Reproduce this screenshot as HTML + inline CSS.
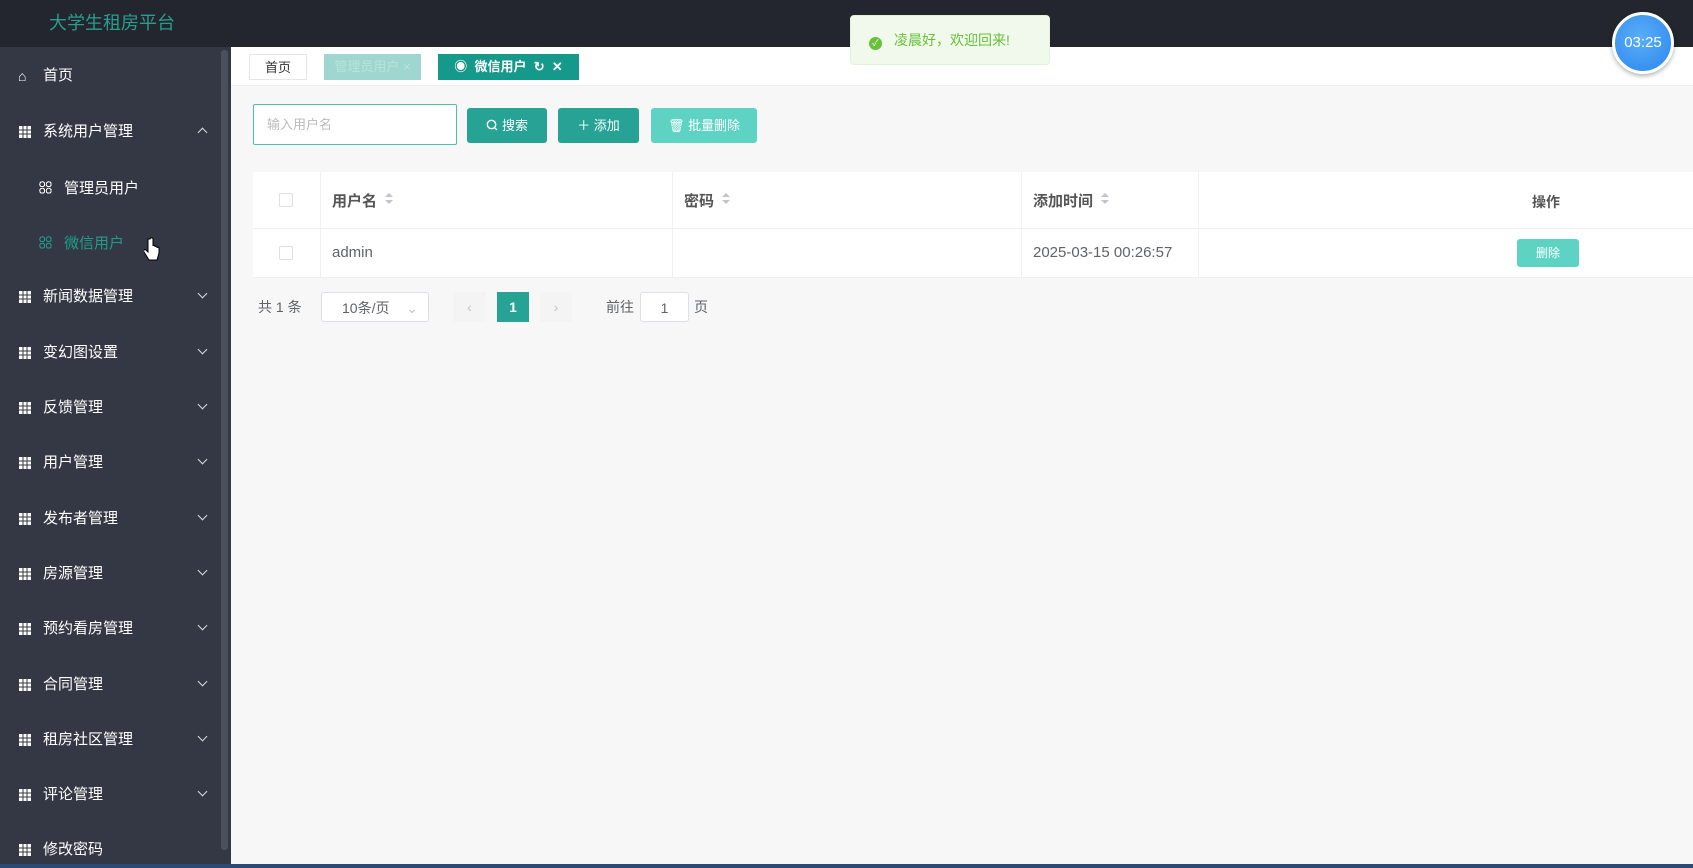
<!DOCTYPE html>
<html><head><meta charset="utf-8"><style>
*{box-sizing:border-box;margin:0;padding:0}
body{width:1693px;height:868px;overflow:hidden;background:#f7f7f7;font-family:"Liberation Sans","Noto Sans CJK SC",sans-serif;position:relative}
.hdr{position:absolute;left:0;top:0;width:1693px;height:47px;background:#23262e}
.title{position:absolute;left:49px;top:9px;color:#2a9d8f;font-size:18px}
.side{position:absolute;left:0;top:47px;width:231px;height:817px;background:#343844}
.sb{position:absolute;left:221px;top:50px;width:7px;height:800px;background:#4c505a;border-radius:3px}
.mi{position:absolute;left:0;width:220px;color:#fff;font-size:15px;height:20px;line-height:20px}
.mi .ic{position:absolute;left:19px;top:4px;width:12px;height:12px;background:
linear-gradient(90deg,transparent 3.5px,#343844 3.5px,#343844 4.5px,transparent 4.5px,transparent 7.5px,#343844 7.5px,#343844 8.5px,transparent 8.5px),
linear-gradient(0deg,transparent 3.5px,#343844 3.5px,#343844 4.5px,transparent 4.5px,transparent 7.5px,#343844 7.5px,#343844 8.5px,transparent 8.5px),#fff}
.mi .t{position:absolute;left:43px;top:0}
.mi .ar{position:absolute;left:199px;top:3px;width:7px;height:7px;border-right:1.5px solid #ddd;border-bottom:1.5px solid #ddd;transform:rotate(45deg)}
.mi .up{top:7px;transform:rotate(-135deg)}
.sub{position:absolute;left:39px;font-size:15px;color:#fff}
.sub .g{display:inline-block;width:13px;height:13px;vertical-align:-1px;margin-right:12px;background:
radial-gradient(circle,transparent 2px,currentColor 2px,currentColor 3px,transparent 3px) 0 0/6.5px 6.5px}
.tabs{position:absolute;left:231px;top:47px;width:1462px;height:39px;background:#fff;border-bottom:1px solid #eee}
.tab{position:absolute;top:7px;height:26px;line-height:26px;font-size:13px;text-align:center}
.inp{position:absolute;left:253px;top:104px;width:204px;height:41px;border:1px solid #4fc0a8;background:#fff;border-radius:2px;color:#bbb;font-size:13px;line-height:39px;padding-left:13px}
.btn{position:absolute;top:108px;height:35px;line-height:35px;color:#fff;font-size:13px;text-align:center;border-radius:3px}
.tbl{position:absolute;left:253px;top:172px;width:1440px;height:105px;background:#fff}
.cell{position:absolute;font-size:15px;color:#606266}
.vl{position:absolute;top:172px;height:105px;width:1px;background:#eef0f3}
.cb{position:absolute;left:279px;width:14px;height:14px;border:1px solid #dcdfe6;border-radius:2px;background:#fff}
.sort{display:inline-block;margin-left:8px;vertical-align:1px;width:0;height:12px;position:relative}
.sort:before{content:"";position:absolute;top:0;border:4px solid transparent;border-bottom-color:#c0c4cc;border-top:0}
.sort:after{content:"";position:absolute;top:7px;border:4px solid transparent;border-top-color:#c0c4cc;border-bottom:0}
.pg{position:absolute;top:292px;height:30px;line-height:30px;font-size:14px;color:#606266}
</style></head><body>
<div class="hdr"><div class="title">大学生租房平台</div></div>
<div class="side"></div>
<div class="sb"></div>
<div class="mi" style="top:66px"><span style="position:absolute;left:18px;top:0;font-size:14px">⌂</span><span class="t">首页</span></div>
<div class="mi" style="top:122px"><span class="ic"></span><span class="t">系统用户管理</span><span class="ar up"></span></div>
<div class="sub" style="top:177px"><span class="g"></span>管理员用户</div>
<div class="sub" style="top:232px;color:#1f9d8a"><span class="g"></span>微信用户</div>
<div class="mi" style="top:287px"><span class="ic"></span><span class="t">新闻数据管理</span><span class="ar"></span></div>
<div class="mi" style="top:343px"><span class="ic"></span><span class="t">变幻图设置</span><span class="ar"></span></div>
<div class="mi" style="top:398px"><span class="ic"></span><span class="t">反馈管理</span><span class="ar"></span></div>
<div class="mi" style="top:453px"><span class="ic"></span><span class="t">用户管理</span><span class="ar"></span></div>
<div class="mi" style="top:509px"><span class="ic"></span><span class="t">发布者管理</span><span class="ar"></span></div>
<div class="mi" style="top:564px"><span class="ic"></span><span class="t">房源管理</span><span class="ar"></span></div>
<div class="mi" style="top:619px"><span class="ic"></span><span class="t">预约看房管理</span><span class="ar"></span></div>
<div class="mi" style="top:675px"><span class="ic"></span><span class="t">合同管理</span><span class="ar"></span></div>
<div class="mi" style="top:730px"><span class="ic"></span><span class="t">租房社区管理</span><span class="ar"></span></div>
<div class="mi" style="top:785px"><span class="ic"></span><span class="t">评论管理</span><span class="ar"></span></div>
<div class="mi" style="top:840px"><span class="ic"></span><span class="t">修改密码</span></div>
<div style="position:absolute;left:0;top:864px;width:1693px;height:4px;background:#2c4a78"></div>
<svg style="position:absolute;left:144px;top:237px" width="16" height="26" viewBox="0 0 16 26"><path d="M4 2v13l-2-2c-1-1-3 0-2 2l5 8h8l2-7v-5c0-1-2-1-2 0v-1c0-1-2-1-2 0v-1c0-1-2-1-2 0V2c0-1.5-3-1.5-3 0z" fill="#fff" stroke="#000" stroke-width="1"/></svg>
<div class="tabs"></div>
<div class="tab" style="left:249px;top:54px;width:58px;border:1px solid #e6e6e6;background:#fff;color:#333">首页</div>
<div class="tab" style="left:324px;top:54px;width:97px;background:#9fd6cf;color:#b9e3dd">管理员用户 ×</div>
<div class="tab" style="left:438px;top:54px;width:141px;background:#15998a;color:#fff;font-weight:bold">◉&nbsp; 微信用户 &nbsp;↻&nbsp; ✕</div>
<div class="inp">输入用户名</div>
<div class="btn" style="left:467px;width:80px;background:#26a394"><svg width="12" height="12" viewBox="0 0 12 12" style="vertical-align:-1px;margin-right:4px"><circle cx="5.5" cy="5.5" r="4.2" fill="none" stroke="#fff" stroke-width="1.4"/><path d="M8.5 8.5l2.5 2.5" stroke="#fff" stroke-width="1.4"/></svg>搜索</div>
<div class="btn" style="left:558px;width:81px;background:#26a394">＋ 添加</div>
<div class="btn" style="left:651px;width:106px;background:#5ed3c4">🗑 批量删除</div>
<div class="tbl"></div>
<div style="position:absolute;left:253px;top:228px;width:1440px;height:1px;background:#eef0f3"></div>
<div style="position:absolute;left:253px;top:277px;width:1440px;height:1px;background:#eef0f3"></div>
<div class="vl" style="left:320px"></div><div class="vl" style="left:672px"></div><div class="vl" style="left:1021px"></div><div class="vl" style="left:1198px"></div>
<div class="cb" style="top:193px"></div><div class="cb" style="top:246px"></div>
<div class="cell" style="left:332px;top:190px;font-weight:bold;color:#555">用户名<span class="sort"></span></div>
<div class="cell" style="left:684px;top:190px;font-weight:bold;color:#555">密码<span class="sort"></span></div>
<div class="cell" style="left:1033px;top:190px;font-weight:bold;color:#555">添加时间<span class="sort"></span></div>
<div class="cell" style="left:1532px;top:192px;font-weight:bold;color:#555;font-size:14px">操作</div>
<div class="cell" style="left:332px;top:244px">admin</div>
<div class="cell" style="left:1033px;top:244px">2025-03-15 00:26:57</div>
<div style="position:absolute;left:1517px;top:239px;width:62px;height:28px;background:#5ed3c4;border-radius:3px;color:#fff;font-size:12px;text-align:center;line-height:28px">删除</div>
<div class="pg" style="left:258px">共 1 条</div>
<div class="pg" style="left:321px;width:108px;background:#fff;border:1px solid #dcdfe6;border-radius:3px;padding-left:20px">10条/页<span style="position:absolute;right:10px;color:#c0c4cc">⌄</span></div>
<div class="pg" style="left:453px;width:33px;background:#f4f4f5;text-align:center;color:#c0c4cc">‹</div>
<div class="pg" style="left:497px;width:32px;background:#26a394;text-align:center;color:#fff;font-weight:bold">1</div>
<div class="pg" style="left:540px;width:32px;background:#f4f4f5;text-align:center;color:#c0c4cc">›</div>
<div class="pg" style="left:606px">前往</div>
<div class="pg" style="left:640px;width:49px;background:#fff;border:1px solid #dcdfe6;border-radius:3px;text-align:center">1</div>
<div class="pg" style="left:694px">页</div>
<div style="position:absolute;left:850px;top:15px;width:200px;height:50px;background:#f0f9eb;border:1px solid #e1f3d8;border-radius:4px;color:#67c23a;font-size:14px;line-height:48px;padding-left:18px"><span style="display:inline-block;width:13px;height:13px;border-radius:50%;background:#67c23a;color:#fff;font-size:9px;line-height:13px;text-align:center;vertical-align:-1px;margin-right:12px">✓</span>凌晨好，欢迎回来!</div>
<div style="position:absolute;left:1612px;top:12px;width:62px;height:62px;border-radius:50%;background:radial-gradient(circle at 45% 40%,#5aaef8,#2a86ee);border:3px solid #fff;box-shadow:0 2px 5px rgba(0,0,0,.3);color:#fff;font-size:15px;text-align:center;line-height:56px">03:25</div>
</body></html>
